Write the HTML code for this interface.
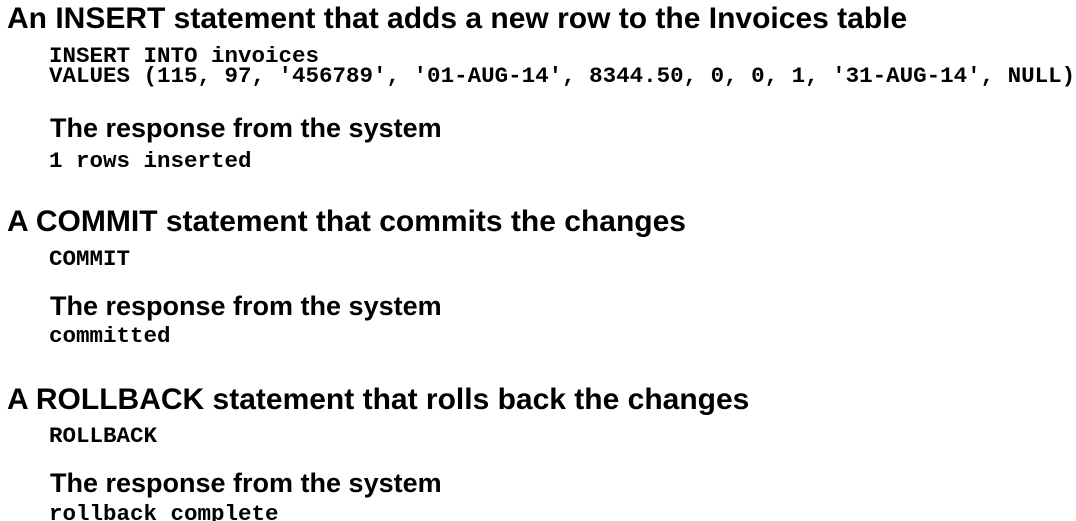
<!DOCTYPE html>
<html><head><meta charset="utf-8"><style>
html,body{margin:0;padding:0;background:#fff;width:1076px;height:521px;overflow:hidden;position:relative}
div{position:absolute;white-space:pre;color:#000;line-height:1}
.h{font:bold 30px "Liberation Sans",Arial,sans-serif;left:7px}
.s{font:bold 27px "Liberation Sans",Arial,sans-serif;left:50px}
.c{font:bold 22.5px "Liberation Mono","Courier New",monospace;left:49px}
</style></head><body>
<div class="h" style="top:2px">An INSERT statement that adds a new row to the Invoices table</div>
<div class="c" style="top:43px">INSERT INTO invoices</div>
<div class="c" style="top:63px">VALUES (115, 97, '456789', '01-AUG-14', 8344.50, 0, 0, 1, '31-AUG-14', NULL)</div>
<div class="s" style="top:113px">The response from the system</div>
<div class="c" style="top:148px">1 rows inserted</div>
<div class="h" style="top:205px">A COMMIT statement that commits the changes</div>
<div class="c" style="top:246px">COMMIT</div>
<div class="s" style="top:291px">The response from the system</div>
<div class="c" style="top:323px">committed</div>
<div class="h" style="top:383px">A ROLLBACK statement that rolls back the changes</div>
<div class="c" style="top:423px">ROLLBACK</div>
<div class="s" style="top:468px">The response from the system</div>
<div class="c" style="top:501px">rollback complete</div>
</body></html>
